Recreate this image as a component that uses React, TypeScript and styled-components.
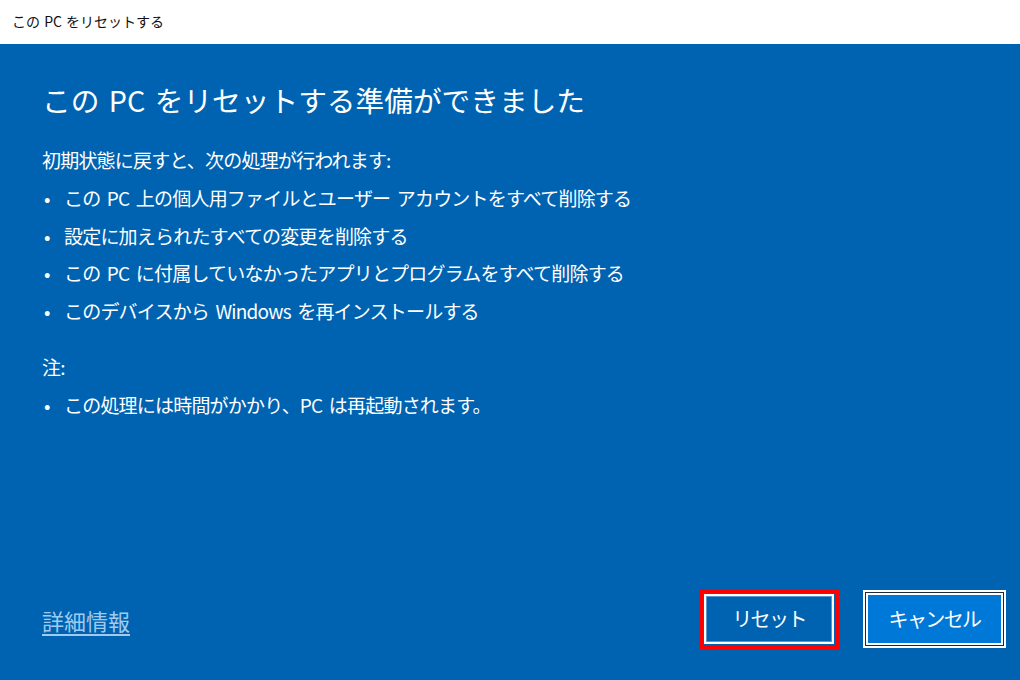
import styled, { createGlobalStyle } from "styled-components"

const GlobalStyle = createGlobalStyle`
  html, body {
    margin: 0;
    padding: 0;
    overflow: hidden;
  }
  body {
    font-family: "Noto Sans CJK JP", "Noto Sans", sans-serif;
  }
`

const Window = styled.div`
  width: 1020px;
  height: 680px;
  display: flex;
  flex-direction: column;
`

const TitleBar = styled.div`
  height: 44px;
  flex-shrink: 0;
  background: #ffffff;
  display: flex;
  align-items: center;
  padding-left: 12px;
  padding-bottom: 2px;
  box-sizing: border-box;
  font-size: 14px;
  word-spacing: 1px;
  color: #111111;
`

const Panel = styled.div`
  flex: 1;
  background: #0063b1;
  color: #ffffff;
  display: flex;
  flex-direction: column;
  padding: 35px 14px 31px 42px;
  box-sizing: border-box;
`

const Heading = styled.h1`
  margin: 0;
  font-size: 28.7px;
  font-weight: 400;
  line-height: 42px;
  word-spacing: 3px;
`

const Section = styled.div<{ $gap: number }>`
  margin-top: ${p => p.$gap}px;
  font-size: 19px;
  letter-spacing: -0.8px;
  word-spacing: 3px;
  line-height: 37.8px;
`

const Lead = styled.div``

const List = styled.ul`
  list-style: none;
  margin: 0;
  padding: 0;
`

const Item = styled.li`
  display: flex;
  &::before {
    content: "•";
    width: 20px;
    padding-left: 2px;
    flex-shrink: 0;
  }
`

const Footer = styled.div`
  margin-top: auto;
  display: flex;
  align-items: center;
  gap: 24px;
`

const MoreLink = styled.a`
  margin-right: auto;
  margin-top: 2px;
  font-size: 22px;
  color: #9fcbf0;
  text-decoration: underline;
  text-underline-offset: 4px;
  cursor: pointer;
`

const Highlight = styled.div`
  border: 4px solid #ff0000;
  padding: 1px;
  display: flex;
`

const Button = styled.button<{ $primary?: boolean }>`
  font-family: inherit;
  font-size: 20px;
  letter-spacing: -1.6px;
  color: #ffffff;
  cursor: pointer;
  display: flex;
  align-items: center;
  justify-content: center;
  padding: 0 0 2px;
  box-sizing: border-box;
  border: 2px solid #ffffff;
  width: ${p => (p.$primary ? 143 : 130)}px;
  height: ${p => (p.$primary ? 58 : 50)}px;
  background: ${p => (p.$primary ? "#0078d7" : "#0063b1")};
  box-shadow: ${p =>
    p.$primary
      ? "inset 0 0 0 1px #1c2b3c, inset 0 0 0 3px #ffffff"
      : "inset 0 0 0 1px rgba(255, 255, 255, 0.35)"};
`

const lines = [
  "この PC 上の個人用ファイルとユーザー アカウントをすべて削除する",
  "設定に加えられたすべての変更を削除する",
  "この PC に付属していなかったアプリとプログラムをすべて削除する",
  "このデバイスから Windows を再インストールする",
]

export default function App() {
  return (
    <Window>
      <GlobalStyle />
      <TitleBar>この PC をリセットする</TitleBar>
      <Panel>
        <Heading>この PC をリセットする準備ができました</Heading>
        <Section $gap={20}>
          <Lead>初期状態に戻すと、次の処理が行われます:</Lead>
          <List>
            {lines.map(l => (
              <Item key={l}>{l}</Item>
            ))}
          </List>
        </Section>
        <Section $gap={18}>
          <Lead>注:</Lead>
          <List>
            <Item>この処理には時間がかかり、PC は再起動されます。</Item>
          </List>
        </Section>
        <Footer>
          <MoreLink>詳細情報</MoreLink>
          <Highlight>
            <Button>リセット</Button>
          </Highlight>
          <Button $primary>キャンセル</Button>
        </Footer>
      </Panel>
    </Window>
  )
}
